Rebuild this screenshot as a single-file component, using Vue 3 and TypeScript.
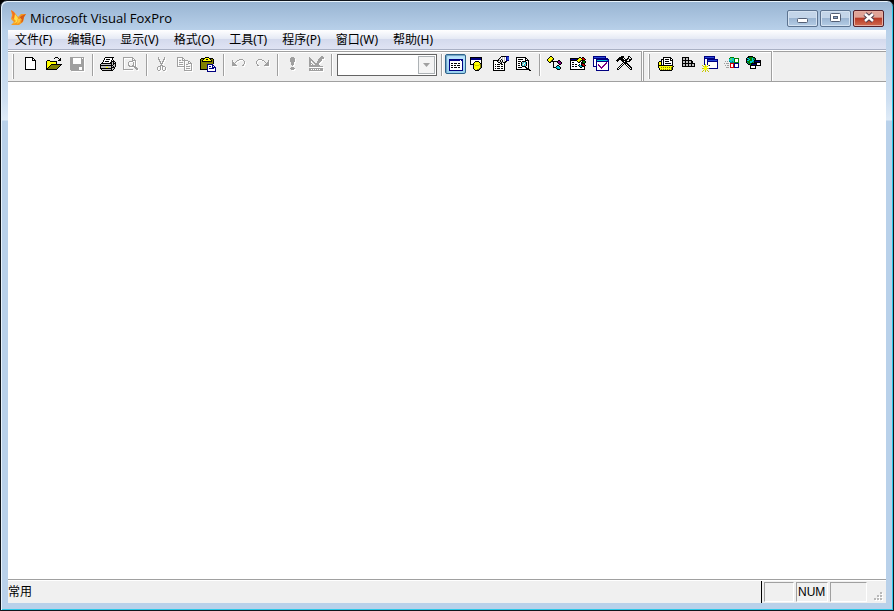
<script setup lang="ts">
import { ref } from 'vue'

interface Tool {
  kind: 'button' | 'separator' | 'combo'
  label?: string
  icon?: string
  disabled?: boolean
  active?: boolean
}

interface Layer {
  color: string
  d: string
}

const palette: Record<string, string> = {
  k: '#000000',
  w: '#ffffff',
  y: '#ffff00',
  v: '#c8c800',
  o: '#808000',
  g: '#a0a0a0',
  s: '#c0c0c0',
  n: '#000080',
  b: '#2848d8',
  t: '#008080',
  c: '#00c8d8',
  m: '#800080',
  r: '#d00000',
  e: '#008000',
  l: '#60d860',
}

const bitmaps: Record<string, string[]> = {
  new: [
    '',
    '..kkkkkkkk',
    '..kwwwwwwkk',
    '..kwwwwwwkwk',
    '..kwwwwwwkkkk',
    '..kwwwwwwwwwk',
    '..kwwwwwwwwwk',
    '..kwwwwwwwwwk',
    '..kwwwwwwwwwk',
    '..kwwwwwwwwwk',
    '..kwwwwwwwwwk',
    '..kwwwwwwwwwk',
    '..kwwwwwwwwwk',
    '..kkkkkkkkkkk',
  ],
  open: [
    '',
    '.........kkk',
    '........k...k.k',
    '.............kk',
    '.kkk........kkk',
    'kyyykkkkkkk',
    'kyyyyyyyyyk',
    'kyyyyyyyyyk',
    'kyyyykkkkkkkkkkk',
    'kyyykoooooooook',
    'kyykoooooooook',
    'kykoooooooook',
    'kkoooooooook',
    'kkkkkkkkkkk',
  ],
  save: [
    '',
    '.gggggggggggggg',
    '.gggwwwwwwwwg.g',
    '.gggwwwwwwwwggg',
    '.gggwwwwwwwwggg',
    '.gggwwwwwwwwggg',
    '.gggwwwwwwwwggg',
    '.gggwwwwwwwwggg',
    '.gggggggggggggg',
    '.gggggggggggggg',
    '.gggggggggggggg',
    '.gggggggggww.gg',
    '.gggggggggww.gg',
    '.gggggggggww.gg',
    '..ggggggggggggg',
  ],
  print: [
    '',
    '.....kkkkkkkkk',
    '....kwwwwwwwk',
    '....kwkkkkwwk',
    '...kwwwwwwwk.k',
    '...kwkkkkwwkkkk',
    '..kwwwwwwwkksksk',
    '.kkkkkkkkkkkskkk',
    'kssssssssssksksk',
    'kkkkkkkkkkkkkssk',
    'kssssssssssksksk',
    'ksssssyyssskkkk',
    'kkkkkkkkkkkkssk',
    '.ksssssssssksk',
    '..kkkkkkkkkkk',
  ],
  preview: [
    '',
    'gggggggggg',
    'g........gg',
    'g........g.g',
    'g........gggg',
    'g.....gggg..g',
    'g....g....g.g',
    'g....g....g.g',
    'g....g....g.g',
    'g....gg..gg.g',
    'g.....ggggggg',
    'g..........ggg',
    'g...........ggg',
    'gggggggggg...gg',
  ],
  cut: [
    '',
    '....g.....g',
    '....g.....g',
    '....gg...gg',
    '.....g...g',
    '.....gg.gg',
    '......g.g',
    '......ggg',
    '.......g',
    '......ggg',
    '....ggg.ggg',
    '...g..g.g..g',
    '...g..g.g..g',
    '...g..g.g..g',
    '....gg...gg',
  ],
  copy: [
    '',
    'gggggg',
    'g....gg',
    'g....g.g',
    'g.gg.gggggg',
    'g......g...gg',
    'g.gggg.g...g.g',
    'g......g...gggg',
    'g.gggg.g.gg...g',
    'g......g......g',
    'gggggggg.gggg.g',
    '.......g......g',
    '.......g.gggg.g',
    '.......g......g',
    '.......gggggggg',
  ],
  paste: [
    '',
    '.....kkkk',
    '.kkkkyyyykkkk',
    'kookyykkyykook',
    'kokyyyyyyyykok',
    'kokkkkkkkkkkok',
    'kooooooooooook',
    'kooooooooooook',
    'koooooonnnnnn',
    'koooooonwwwwnn',
    'koooooonwnnwnwn',
    'koooooonwwwwnnnn',
    'koooooonwnnnnnwn',
    'kkkkkkknwwwwwwwn',
    '.......nwwwwwwwn',
    '.......nnnnnnnnn',
  ],
  undo: [
    '',
    '',
    '',
    '........gggg',
    '.g....gg....g',
    '.g...g.......g',
    '.gg.g........g',
    '.ggg.........g',
    '.gggg.......g',
    '.ggggg.....gg',
  ],
  redo: [
    '',
    '',
    '',
    '....gggg',
    '...g....gg....g',
    '..g.......g...g',
    '..g........g.gg',
    '..g.........ggg',
    '...g.......gggg',
    '...gg.....ggggg',
  ],
  run: [
    '',
    '......ggg',
    '.....ggggg',
    '.....ggggg',
    '.....ggggg',
    '.....ggggg',
    '......ggg',
    '......ggg',
    '......ggg',
    '.......g',
    '',
    '......ggg',
    '.....ggggg',
    '......ggg',
  ],
  modify: [
    '.............gg',
    '.g..........gggg',
    '.gg........ggggg',
    '.ggg......gggg',
    '.gggg.....gggg',
    '.gg.gg...gggg',
    '.gg..gg..ggg',
    '.ggg..ggggg',
    '.gg.g..gggg',
    '.ggggggggggg',
    '.gggggggggggggg',
    '',
    '.gggggggggggggg',
    '.gg.g.g.g.g.ggg',
    '.gggggggggggggg',
  ],
  form: [
    '',
    '',
    '',
    '.nnnnnnnnnnnnnn',
    '.nnnnnnnnnnnwnn',
    '.nwwwwwwwwwwwwn',
    '.nwwwwwwwwwwwwn',
    '.nwkkwkkkwkkwwn',
    '.nwwwwwwwwwwwwn',
    '.nwkkwkkwkkkwwn',
    '.nwwwwwwwwwwwwn',
    '.nwkkwkkkwkkwwn',
    '.nwwwwwwwwwwwwn',
    '.nwwwwwwwwwwwwn',
    '.nnnnnnnnnnnnnn',
  ],
  data: [
    '',
    'kkkkkkkkkkkk',
    'knnnnnnnnnnk',
    'knnnnnnnnnnk',
    'kwwwwwwwwwwk',
    'kwwwwkkkkwwk',
    'kwwwkyyyykwk',
    'kwwkyyyyyykk',
    'kkkkvyyyyvok',
    '...kyvvvvyok',
    '...kyyyyyyok',
    '...kyyyyyyok',
    '...kyyyyyok',
    '....kyyook',
    '.....kkkk',
  ],
  properties: [
    '........kkkkknnn',
    '.......kwswswnbb',
    '......kswswswnbb',
    '.....kswkswswnbb',
    'kkkkkkskwkwswnnn',
    'kwwwkswkskwskk',
    'kwwwwkkskskkk',
    'kwwwwwwkkwwk',
    'kwkwkkkwkkwk',
    'kwwwwwwwwwwk',
    'kwkwkkkwkkwk',
    'kwwwwwwwwwwk',
    'kwkwkkkwkkwk',
    'kwwwwwwwwwwk',
    'kkkkkkkkkkkk',
  ],
  browse: [
    '',
    'kkkkkkkkkk',
    'kwwwwwwwwkk',
    'kwkkkkkwwkwk',
    'kwwwwwwwwkkkk',
    'kwkkkwkkkkwwk',
    'kwwwwkscsckwk',
    'kwkkwkcswckwk',
    'kwwwwkswcskwk',
    'kwkkwkcscskwk',
    'kwwwwwkkkkwwk',
    'kwkkkkwwwkkwk',
    'kwwwwwwwwwkkk',
    'kkkkkkkkkkkkkk',
    '.............kk',
  ],
  builder: [
    '...kk',
    '..kyyk',
    '.kyyyyk',
    'kyyyyok',
    'kyyyok.....kk',
    '.kyokkkkkkkmmk',
    '..kk..k...kmmmk',
    '......k....kmmk',
    '......k.....kk',
    '......k...kk',
    '......k..kcck',
    '......kkkcccck',
    '.........ktcck',
    '..........kkk',
  ],
  wizard: [
    '',
    '.........kk.kk',
    'kkkkkkkkkyykrrk',
    'knnnnnnkyyyykrrk',
    'kkkkkkkyyyokkkk',
    'kwwwwwwkyokwkeek',
    'kwkkwwwwkkwkkeek',
    'kwwwwwwwwwwkkkk',
    'kwkkwkkwwkwkrrk',
    'kwwwwwwwkcckkrrk',
    'kwkkwkkwwkcckkk',
    'kwwwwwwwwwkkwwk',
    'kwwwwwwwwwwwwwk',
    'kkkkkkkkkkkkkkk',
  ],
  tasks: [
    'nnnnnnnnnnnnn',
    'nbbbbbbbbbbbn',
    'nnnnnnnnnnnnnnn',
    'nwwnnnnnnnnnnnnn',
    'nwwnccccccccccbn',
    'nwwnnnnnnnnnnnnn',
    'nwwnwwwwwwwwwmwn',
    'nwwnwwwwwwwwmmwn',
    'nwwnwmwwwwwmmwwn',
    'nwwnwmmwwwmmwwwn',
    'nnnnwwmmwmmwwwwn',
    '...nwwwmmmwwwwwn',
    '...nwwwwmwwwwwwn',
    '...nwwwwwwwwwwwn',
    '...nnnnnnnnnnnnn',
  ],
  tools: [
    '.....kkk....kk',
    '...kkkkk....k.k',
    '..kkkkkwk..kk..k',
    '.kkkkkkkwkkk.kkk',
    'kkk..kkkkkkwwkk',
    '.k....kkwkkkkk',
    '.......kkkk',
    '......kwkkkk',
    '.....kwk.kwkk',
    '....kwk...kwkk',
    '...kwk.....kwkk',
    '..kwk.......kwkk',
    '.kwk.........kwk',
    '.kk...........kk',
  ],
  folder: [
    '',
    '.....kkkkkkkk',
    '.....kwwwwwwkk',
    '...kkkwkkkkwkwk',
    '...kwkwwwwwwkkk',
    '.kkkwkwkkkkwwwk',
    'kyykwkwwwwwwwwk',
    'kyykwkwkkkkkkwk',
    'kyykwkwwwwwwwwk',
    'kkkkkkkkkkkkkkk',
    'kyyyyyyyyyyyyyok',
    'kyyoyoyoyoyoyok',
    '.kyyyyyyyyyyyok',
    '.kyoyoyoyoyoyok',
    '..kkkkkkkkkkkk',
  ],
  grid: [
    '',
    '..kkkkkkk',
    '..ksskssk',
    '..ksskssk',
    '..kkkkkkkkkk',
    '..ksskssksskk',
    '..ksskssksskk',
    '..kkkkkkkkkkkkk',
    '..ksskssksskssk',
    '..ksskssksskssk',
    '..kkkkkkkkkkkkk',
  ],
  forms: [
    '..nnnnnnnnnnn',
    '..nbbbbbbbbbn',
    '..nnnnnnnnnnn',
    '..nwwnnnnnnnnnnn',
    '..nwwnbbbbbbbbbn',
    '..nwwnnnnnnnnnnn',
    '..nwwnwwwwwwwwwn',
    '..nwwnwwwwwwwwwn',
    '..nvwnwwwwwwwwwn',
    'v..v..vnwwwwwwwn',
    '.vyvyvwwwwwwwwwn',
    '..yyywwwwwwwwwwn',
    'vvyyyvvnnnnnnnnn',
    '..yyy',
    '.v.v.v',
    'v..v..v',
  ],
  cubes: [
    '',
    '......eeee',
    '.....eclcceeeee',
    '.....cllccewwwe',
    '.....ccclcewwwe',
    '.g.g.tcctcewwwe',
    '......tttteeeee',
    'g.ggg.rrrrnnnnn',
    '......rwwrnwwwn',
    '.g.gg.rwwrnwwwn',
    '......rwwrnwwwn',
    '..ggg.rrrrnnnnn',
  ],
  server: [
    '..kkkkk',
    '.kkeeeekk',
    'kcceeectek',
    'kktceecetk',
    'kcceeecckkkkkkk',
    'keeeccctknnnnnk',
    'kteeccetkkkkkkk',
    '.kteekkkkkkwwwk',
    '..kkeknnnnkwwwk',
    '....kkkkkkkkkkk',
    '....kwwwwk',
    '....kwwwwk',
    '....kkkkkk',
  ],
}

function layersOf(name: string): Layer[] {
  const paths = new Map<string, string>()
  bitmaps[name].forEach((row, y) => {
    for (const run of row.matchAll(/([a-z])\1*/g)) {
      const length = run[0].length
      paths.set(run[1], `${paths.get(run[1]) ?? ''}M${run.index} ${y}h${length}v1h-${length}z`)
    }
  })
  return [...paths].map(([key, d]) => ({ color: palette[key], d }))
}

const icons: Record<string, Layer[]> = Object.fromEntries(
  Object.keys(bitmaps).map((name) => [name, layersOf(name)]),
)

const button = (icon: string, label: string, extra: Partial<Tool> = {}): Tool => ({
  kind: 'button',
  icon,
  label,
  ...extra,
})
const separator: Tool = { kind: 'separator' }
const off = { disabled: true }

const standardBar: Tool[] = [
  button('new', '新建'),
  button('open', '打开'),
  button('save', '保存', off),
  separator,
  button('print', '打印'),
  button('preview', '打印预览', off),
  separator,
  button('cut', '剪切', off),
  button('copy', '复制', off),
  button('paste', '粘贴'),
  separator,
  button('undo', '撤消', off),
  button('redo', '重做', off),
  separator,
  button('run', '运行', off),
  button('modify', '修改表单', off),
  separator,
  { kind: 'combo', label: '数据库' },
  separator,
  button('form', '命令窗口', { active: true }),
  button('data', '数据工作期窗口'),
  button('properties', '属性窗口'),
  button('browse', '文档视图'),
  separator,
  button('builder', '类浏览器'),
  button('wizard', '对象浏览器'),
  button('tasks', '任务窗格'),
  button('tools', '工具箱'),
]

const secondBar: Tool[] = [
  button('folder', '项目'),
  button('grid', '表'),
  button('forms', '表单'),
  button('cubes', '组件'),
  button('server', '服务器'),
]

const bars = [
  { name: '常用', className: 'standard', tools: standardBar },
  { name: '组件', className: 'compact', tools: secondBar },
]

const menus = ['文件(F)', '编辑(E)', '显示(V)', '格式(O)', '工具(T)', '程序(P)', '窗口(W)', '帮助(H)']
const database = ref('')
</script>

<template>
  <div class="window">
    <header class="titlebar">
      <svg class="logo" viewBox="0 0 16 16" aria-hidden="true">
        <path d="M1 0 5 3 8 7 11 4 16 4 14 7 13 12 9 15 1 15 4 12 1 9 2 5z" fill="#f59a22" />
        <path d="M1 0 4 2 7 8 4 9 2 8 3 5z" fill="#f4711d" />
        <path d="M5 4 8 8 7 12 3 14 6 11 4 9z" fill="#ffe04a" />
        <path d="M16 4 11 6 9 9 12 9 11 13 13 11 14 7z" fill="#d65a16" />
        <path d="M8 9 11 8 10 12 7 14z" fill="#ffc43a" />
      </svg>
      <h1>Microsoft Visual FoxPro</h1>
      <div class="captions">
        <button class="caption" type="button" aria-label="最小化">
          <svg viewBox="0 0 14 12"><rect x="1.500" y="6.500" width="10" height="4" rx="1" fill="#fff" stroke="#535f75" /></svg>
        </button>
        <button class="caption" type="button" aria-label="最大化">
          <svg viewBox="0 0 14 12">
            <rect x="1.500" y="1.500" width="10" height="8" rx="1" fill="#fff" stroke="#535f75" />
            <rect x="4.500" y="4.500" width="4" height="2" fill="#8ba7c9" stroke="#535f75" />
          </svg>
        </button>
        <button class="caption close" type="button" aria-label="关闭">
          <svg viewBox="0 0 14 12">
            <path d="M3 2 11 9M11 2 3 9" stroke="#4c3b4a" stroke-width="4.500" />
            <path d="M3 2 11 9M11 2 3 9" stroke="#fff" stroke-width="2.500" />
          </svg>
        </button>
      </div>
    </header>

    <div class="client">
      <nav class="menubar">
        <button v-for="menu in menus" :key="menu" type="button">{{ menu }}</button>
      </nav>

      <div class="toolbars">
        <div v-for="bar in bars" :key="bar.name" class="bar" :class="bar.className" role="toolbar" :aria-label="bar.name">
          <span class="grip"></span>
          <template v-for="(tool, index) in bar.tools" :key="index">
            <span v-if="tool.kind === 'separator'" class="separator"></span>
            <span v-else-if="tool.kind === 'combo'" class="combo">
              <select v-model="database" :aria-label="tool.label" disabled>
                <option value=""></option>
              </select>
              <span class="arrow"><svg viewBox="0 0 7 4"><path d="M0 0h7L3.500 4z" fill="#a0a0a0" /></svg></span>
            </span>
            <button
              v-else
              class="tool"
              :class="{ active: tool.active }"
              type="button"
              :disabled="tool.disabled"
              :aria-label="tool.label"
            >
              <svg viewBox="0 0 16 16" shape-rendering="crispEdges">
                <g v-if="tool.disabled" transform="translate(1 1)" fill="#fff">
                  <path v-for="layer in icons[tool.icon!]" :key="layer.color" :d="layer.d" />
                </g>
                <path v-for="layer in icons[tool.icon!]" :key="layer.color" :d="layer.d" :fill="layer.color" />
              </svg>
            </button>
          </template>
        </div>
      </div>

      <main class="workspace"></main>

      <footer class="statusbar">
        <span class="message">常用</span>
        <div class="panes">
          <span class="pane narrow"></span>
          <span class="pane">NUM</span>
          <span class="pane wide"></span>
        </div>
        <svg class="sizer" viewBox="0 0 10 10" shape-rendering="crispEdges" aria-hidden="true">
          <path d="M7 1h2v2h-2zM4 4h2v2h-2zM7 4h2v2h-2zM1 7h2v2h-2zM4 7h2v2h-2zM7 7h2v2h-2z" fill="#fff" />
          <path d="M6 0h2v2h-2zM3 3h2v2h-2zM6 3h2v2h-2zM0 6h2v2h-2zM3 6h2v2h-2zM6 6h2v2h-2z" fill="#b8b8b8" />
        </svg>
      </footer>
    </div>
  </div>
</template>

<style>
body {
  margin: 0;
  background: #000;
}
</style>

<style scoped>
* {
  box-sizing: border-box;
}

button {
  margin: 0;
  padding: 0;
  border: 0;
  background: none;
  color: inherit;
  font: inherit;
}

.window {
  display: flex;
  flex-direction: column;
  height: 100vh;
  padding: 0 7px 7px;
  border: 1px solid #10151c;
  border-radius: 7px 7px 0 0;
  background:
    linear-gradient(#98b4d2, #b9d1ea 30px, #cfe0f2 100px, #dfebf7 119px, transparent 120px),
    #b9d1ea;
  box-shadow: inset 1px 1px #e8f3fc, inset -1px -1px #2cc8e8;
  font: 12px/18px "Noto Sans", "Noto Sans CJK SC", sans-serif;
  color: #000;
}

.titlebar {
  display: flex;
  flex: none;
  align-items: center;
  height: 29px;
  padding: 5px 2px 0;
}

.logo {
  width: 16px;
  height: 16px;
  margin-right: 4px;
}

h1 {
  flex: 1;
  margin: 0;
  font: 13px/18px "Open Sans", sans-serif;
}

.captions {
  display: flex;
  gap: 2px;
}

.caption {
  display: grid;
  place-items: center;
  width: 31px;
  height: 17px;
  border: 1px solid #5c7390;
  border-radius: 2px;
  background: linear-gradient(#c3d5e9 0 45%, #9bb5d2 50%, #b5cde5);
  box-shadow: inset 0 0 0 1px #d4e2f1;
}

.caption svg {
  width: 14px;
  height: 12px;
}

.close {
  border-color: #55202a;
  background: linear-gradient(#dfa397 0 40%, #b93a26 50%, #cf6c50);
  box-shadow: inset 0 0 0 1px #e6aea2;
}

.client {
  display: flex;
  flex: 1;
  flex-direction: column;
  min-height: 0;
  background: #fff;
}

.menubar {
  display: flex;
  flex: none;
  gap: 1px;
  height: 20px;
  border-bottom: 1px solid #a9b0c4;
  background: linear-gradient(#fff, #e6eaf5 45%, #d4daed 50%, #dfe3f3);
}

.menubar button {
  padding: 1px 7px 0;
}

.toolbars {
  display: flex;
  flex: none;
  height: 32px;
  border-top: 1px solid #fff;
  border-bottom: 1px solid #a0a0a0;
  background: #efefef;
  box-shadow: inset 0 1px #a0a0a0;
}

.bar {
  display: flex;
  align-items: flex-start;
  padding: 2px 6px 0 4px;
  border-top: 1px solid #a0a0a0;
  border-right: 1px solid #a0a0a0;
  box-shadow: 1px 0 #fff, inset 0 1px #fff;
}

.compact {
  margin-left: 1px;
  border-left: 1px solid #a0a0a0;
}

.grip {
  width: 2px;
  height: 25px;
  margin-right: 5px;
  border-left: 1px solid #fff;
  border-right: 1px solid #a0a0a0;
}

.separator {
  width: 8px;
  height: 22px;
  background: linear-gradient(90deg, transparent 4px, #a0a0a0 4px 5px, #fff 5px 6px, transparent 6px);
}

.tool {
  display: grid;
  place-items: center;
  width: 23px;
  height: 20px;
}

.tool svg {
  width: 16px;
  height: 16px;
  overflow: visible;
}

.compact .tool {
  width: 22px;
}

.tool.active {
  width: 21px;
  border: 1px solid #2c628b;
  border-radius: 2px;
  background: linear-gradient(#bee6fd, #98d1ef);
  box-shadow: inset 1px 1px 1px #6d9fbf;
}

.combo {
  display: grid;
  width: 102px;
  height: 22px;
  padding-left: 2px;
}

.combo select {
  grid-area: 1 / 1;
  appearance: none;
  width: 100px;
  height: 22px;
  border: 1px solid #646464;
  border-radius: 0;
  background: #fff;
  opacity: 1;
}

.arrow {
  display: grid;
  grid-area: 1 / 1;
  place-items: center;
  place-self: center end;
  width: 17px;
  height: 18px;
  margin-right: 2px;
  border: 1px solid #adb2b5;
  background: #f4f4f4;
  pointer-events: none;
}

.arrow svg {
  width: 7px;
  height: 4px;
}

.workspace {
  flex: 1;
  min-height: 0;
  background: #fff;
}

.statusbar {
  display: flex;
  flex: none;
  height: 24px;
  border-top: 1px solid #a0a0a0;
  background: #f0f0f0;
  box-shadow: inset 0 1px #fff;
  font-family: "Liberation Sans", "Noto Sans CJK SC", sans-serif;
  line-height: 24px;
}

.message {
  flex: 1;
}

.panes {
  display: flex;
  gap: 2px;
  margin-top: 1px;
  padding: 1px 0 1px 2px;
  border-left: 1px solid #000;
}

.pane {
  width: 32px;
  padding: 0 1px;
  border: 1px solid;
  border-color: #a0a0a0 #fff #fff #a0a0a0;
  line-height: 18px;
}

.narrow {
  width: 30px;
}

.wide {
  width: 37px;
}

.sizer {
  align-self: flex-end;
  width: 10px;
  height: 10px;
  margin: 0 2px 1px 7px;
}
</style>
